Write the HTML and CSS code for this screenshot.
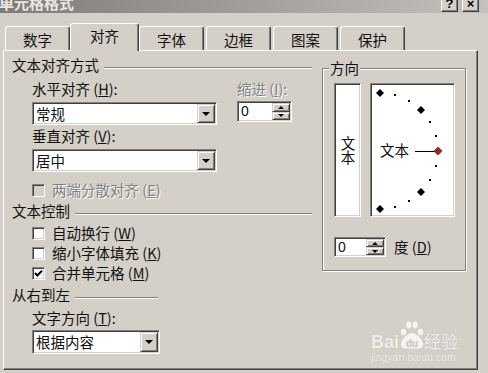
FILE: index.html
```html
<!DOCTYPE html>
<html lang="zh-CN">
<head>
  <meta charset="UTF-8" />
  <meta name="viewport" content="width=device-width, initial-scale=1.0"/>
  <title>单元格格式</title>
  <link rel="stylesheet" href="styles.css">
</head>
<body>
  <div class="dialog">

    <div class="titlebar">
      <span class="title">单元格格式</span>
      <span class="cap-btn help">?</span>
      <span class="cap-btn close">×</span>
    </div>

    <div class="tabs">
      <div class="tab">数字</div>
      <div class="tab active">对齐</div>
      <div class="tab">字体</div>
      <div class="tab">边框</div>
      <div class="tab">图案</div>
      <div class="tab">保护</div>
    </div>

    <div class="panel">
      <div class="left-col">
        <div class="sec-head"><span>文本对齐方式</span><i class="etch"></i></div>

        <div class="align-row">
          <div class="align-main">
            <div class="label">水平对齐 (<u>H</u>):</div>
            <div class="combo wide"><span class="value">常规</span><b class="drop"></b></div>
            <div class="label gap-top">垂直对齐 (<u>V</u>):</div>
            <div class="combo wide"><span class="value">居中</span><b class="drop"></b></div>
          </div>
          <div class="indent">
            <div class="label disabled">缩进 (<u>I</u>):</div>
            <div class="spin indent-spin">
              <span class="value">0</span>
              <span class="spin-btns"><b class="up"></b><b class="down"></b></span>
            </div>
          </div>
        </div>

        <div class="check first-check">
          <span class="box off"></span>
          <span class="disabled">两端分散对齐 (<u>E</u>)</span>
        </div>

        <div class="sec-head control-head"><span>文本控制</span><i class="etch"></i></div>
        <div class="check-list">
          <div class="check"><span class="box"></span><span>自动换行 (<u>W</u>)</span></div>
          <div class="check"><span class="box"></span><span>缩小字体填充 (<u>K</u>)</span></div>
          <div class="check">
            <span class="box">
              <svg width="11" height="11" viewBox="0 0 11 11"><path d="M2 5 L4.3 7.5 L9 2.8" fill="none" stroke="#000" stroke-width="2"/></svg>
            </span>
            <span>合并单元格 (<u>M</u>)</span>
          </div>
        </div>

        <div class="sec-head rtl-head"><span>从右到左</span><i class="etch"></i></div>
        <div class="label dir-label">文字方向 (<u>T</u>):</div>
        <div class="combo narrow"><span class="value">根据内容</span><b class="drop"></b></div>
      </div>

      <fieldset class="orient">
        <legend>方向</legend>
        <div class="orient-row">
          <div class="well vtext"><span>文本</span></div>
          <div class="well arc">
            <svg width="81" height="130" viewBox="0 0 81 130">
              <g fill="#000">
                <path d="M7 3 L11 7 L7 11 L3 7 Z"/>
                <rect x="21" y="8" width="2" height="2"/>
                <rect x="35" y="14" width="2" height="2"/>
                <path d="M48 20 L52 24 L48 28 L44 24 Z"/>
                <rect x="56" y="35" width="2" height="2"/>
                <rect x="62" y="49" width="2" height="2"/>
                <rect x="62" y="79" width="2" height="2"/>
                <rect x="56" y="93" width="2" height="2"/>
                <path d="M48 102 L52 106 L48 110 L44 106 Z"/>
                <rect x="35" y="114" width="2" height="2"/>
                <rect x="21" y="120" width="2" height="2"/>
                <path d="M7 119 L11 123 L7 127 L3 123 Z"/>
              </g>
              <text x="7" y="70" class="arc-text">文本</text>
              <line x1="42" y1="65.5" x2="62" y2="65.5" stroke="#000" stroke-width="1"/>
              <path d="M65 60.5 L69.5 65 L65 69.5 L60.5 65 Z" fill="#8a2c2c"/>
            </svg>
          </div>
        </div>
        <div class="spin-row">
          <div class="spin deg-spin">
            <span class="value">0</span>
            <span class="spin-btns"><b class="up"></b><b class="down"></b></span>
          </div>
          <span>度 (<u>D</u>)</span>
        </div>
      </fieldset>
    </div>

    <div class="watermark">
      <div class="wm-brand">
        <span class="wm-bai">Bai</span>
        <svg class="wm-paw" width="24" height="29" viewBox="0 0 24 29">
          <g fill="currentColor">
            <ellipse cx="3.5" cy="12" rx="2.6" ry="3.2"/>
            <ellipse cx="8.8" cy="5" rx="2.6" ry="3.4"/>
            <ellipse cx="15.2" cy="5" rx="2.6" ry="3.4"/>
            <ellipse cx="20.5" cy="12" rx="2.6" ry="3.2"/>
            <path d="M12 13 C7 13 1 20 1 24.5 C1 28 4 28.5 6.5 28.5 L17.5 28.5 C20 28.5 23 28 23 24.5 C23 20 17 13 12 13 Z"/>
          </g>
          <text x="12" y="26.5" class="wm-du">du</text>
        </svg>
        <span class="wm-jy">经验</span>
      </div>
      <div class="wm-url">jingyan.baidu.com</div>
    </div>

  </div>
</body>
</html>
```

FILE: styles.css
```css
* {
  box-sizing: border-box;
}

body {
  margin: 0;
  width: 488px;
  height: 373px;
  overflow: hidden;
  background: #d4d0c8;
  font-family: "Noto Sans CJK SC", "Noto Sans", sans-serif;
  font-size: 14.5px;
  line-height: 16px;
  color: #111;
}

u {
  text-decoration-thickness: 1px;
  text-underline-offset: 1px;
}

.dialog {
  position: relative;
  height: 373px;
}

/* title bar (cut off at the top of the shot) */
.titlebar {
  display: flex;
  align-items: flex-start;
  height: 13px;
  overflow: hidden;
  background: linear-gradient(to right, #7e7c79, #c4c1bc);
}

.title {
  margin: -6px 0 0 -1px;
  font-size: 15px;
  font-weight: bold;
  line-height: 18px;
  color: #ebe8e3;
}

.cap-btn {
  width: 17px;
  height: 15px;
  margin-top: -3px;
  background: #d4d0c8;
  border: 1px solid;
  border-color: #fff #404040 #404040 #fff;
  box-shadow: inset -1px -1px #808080;
  font-family: "Liberation Sans", sans-serif;
  font-weight: bold;
  font-size: 13px;
  line-height: 12px;
  text-align: center;
  color: #000;
}

.help {
  margin-left: auto;
}

.close {
  margin: -3px 9px 0 4px;
}

/* tabs */
.tabs {
  display: flex;
  align-items: flex-end;
  gap: 2px;
  height: 37px;
  padding-left: 5px;
}

.tab {
  width: 65px;
  height: 24px;
  padding-top: 5px;
  text-align: center;
  background: #d4d0c8;
  border-top: 1px solid #fff;
  border-left: 1px solid #fff;
  border-right: 1px solid #404040;
  border-radius: 3px 3px 0 0;
  box-shadow: inset -1px 0 #808080;
}

.tab.active {
  position: relative;
  z-index: 2;
  width: 69px;
  height: 28px;
  margin: 0 -2px -1px;
  padding-top: 4px;
}

/* page of the tab */
.panel {
  display: flex;
  align-items: flex-start;
  width: 475px;
  height: 320px;
  margin-left: 3px;
  padding: 6px 0 0 8px;
  border: 1px solid;
  border-color: #fff #404040 #404040 #fff;
  box-shadow: inset -1px -1px #808080;
}

.left-col {
  width: 300px;
}

.sec-head {
  display: flex;
  height: 16px;
}

.etch {
  flex: 1;
  height: 2px;
  margin: 10px 0 0 5px;
  border-top: 1px solid #808080;
  border-bottom: 1px solid #fff;
}

.control-head {
  margin-top: 5px;
}

.rtl-head {
  width: 146px;
  margin-top: 6px;
}

.label {
  height: 16px;
  white-space: nowrap;
}

.disabled {
  color: #808080;
  text-shadow: 1px 1px #fff;
}

.align-row {
  display: flex;
  gap: 20px;
  margin: 8px 0 0 20px;
}

.align-main .combo {
  margin-top: 5px;
}

.gap-top {
  margin-top: 3px;
}

.indent .spin {
  margin-top: 4px;
}

/* sunken fields */
.combo,
.spin,
.box,
.well {
  background: #fff;
  border: 1px solid;
  border-color: #808080 #fff #fff #808080;
  box-shadow: inset 1px 1px #404040, inset -1px -1px #d4d0c8;
}

.combo,
.spin {
  display: flex;
  padding: 1px;
}

.combo {
  height: 23px;
}

.combo.wide {
  width: 185px;
}

.combo.narrow {
  width: 128px;
  height: 24px;
  margin: 4px 0 0 20px;
}

.value {
  flex: 1;
  padding-left: 2px;
  line-height: 19px;
}

.drop,
.spin-btns b {
  display: flex;
  align-items: center;
  justify-content: center;
  background: #d4d0c8;
  border: 1px solid;
  border-color: #d4d0c8 #404040 #404040 #d4d0c8;
  box-shadow: inset 1px 1px #fff, inset -1px -1px #808080;
}

.drop {
  width: 18px;
}

.drop::after {
  content: "";
  border-left: 4px solid transparent;
  border-right: 4px solid transparent;
  border-top: 4px solid #000;
}

.spin {
  height: 21px;
}

.indent-spin {
  width: 55px;
}

.spin .value {
  line-height: 17px;
  font-family: "Liberation Sans", sans-serif;
  font-size: 14px;
}

.spin-btns {
  display: flex;
  flex-direction: column;
  width: 18px;
}

.spin-btns b {
  flex: 1;
}

.spin-btns .up::after {
  content: "";
  border-left: 3px solid transparent;
  border-right: 3px solid transparent;
  border-bottom: 3px solid #000;
}

.spin-btns .down::after {
  content: "";
  border-left: 3px solid transparent;
  border-right: 3px solid transparent;
  border-top: 3px solid #000;
}

/* checkboxes */
.check {
  display: flex;
  align-items: center;
  gap: 7px;
  height: 16px;
  margin-left: 20px;
  white-space: nowrap;
}

.first-check {
  margin-top: 10px;
}

.check-list {
  display: flex;
  flex-direction: column;
  gap: 4px;
  margin-top: 6px;
}

.box {
  width: 13px;
  height: 13px;
}

.box svg {
  display: block;
}

.box.off {
  background: #d4d0c8;
}

.dir-label {
  margin: 7px 0 0 20px;
}

/* orientation group */
.orient {
  width: 144px;
  min-width: 0;
  margin: 3px 0 0 10px;
  padding: 0 0 13px 0;
  border: 1px solid #808080;
  box-shadow: 1px 1px #fff, inset 1px 1px #fff;
}

.orient legend {
  margin-left: 6px;
  padding: 0 1px;
  line-height: 16px;
  background: #d4d0c8;
}

.orient-row {
  display: flex;
  gap: 9px;
  margin: 7px 0 0 11px;
}

.well {
  height: 134px;
  padding: 2px;
}

.vtext {
  display: flex;
  align-items: center;
  justify-content: center;
  width: 27px;
}

.vtext span {
  writing-mode: vertical-rl;
  line-height: 16px;
}

.arc {
  width: 85px;
}

.arc svg {
  display: block;
}

.arc-text {
  font-family: "Noto Sans CJK SC", sans-serif;
  font-size: 14.5px;
  fill: #111;
}

.spin-row {
  display: flex;
  align-items: center;
  gap: 8px;
  margin: 20px 0 0 11px;
}

.deg-spin {
  width: 52px;
  height: 20px;
}

.deg-spin .value {
  line-height: 16px;
}

/* watermark over the page */
.watermark {
  position: absolute;
  left: 371px;
  top: 319px;
  color: rgba(255, 255, 255, 0.78);
  text-shadow: 0 0 1px rgba(90, 90, 90, 0.25);
}

.wm-brand {
  display: flex;
  align-items: flex-end;
  height: 30px;
}

.wm-bai {
  font-family: "Liberation Sans", sans-serif;
  font-weight: bold;
  font-size: 18px;
  line-height: 18px;
  margin-bottom: -2px;
}

.wm-paw {
  display: block;
  margin: 0 0 0 1px;
}

.wm-du {
  font-family: "Liberation Sans", sans-serif;
  font-weight: bold;
  font-size: 10px;
  text-anchor: middle;
  fill: #cfcbc3;
}

.wm-jy {
  font-size: 17px;
  line-height: 18px;
  margin-bottom: -1px;
}

.wm-url {
  margin-top: 2px;
  font-family: "Liberation Sans", sans-serif;
  font-size: 10.5px;
  line-height: 12px;
}
```
